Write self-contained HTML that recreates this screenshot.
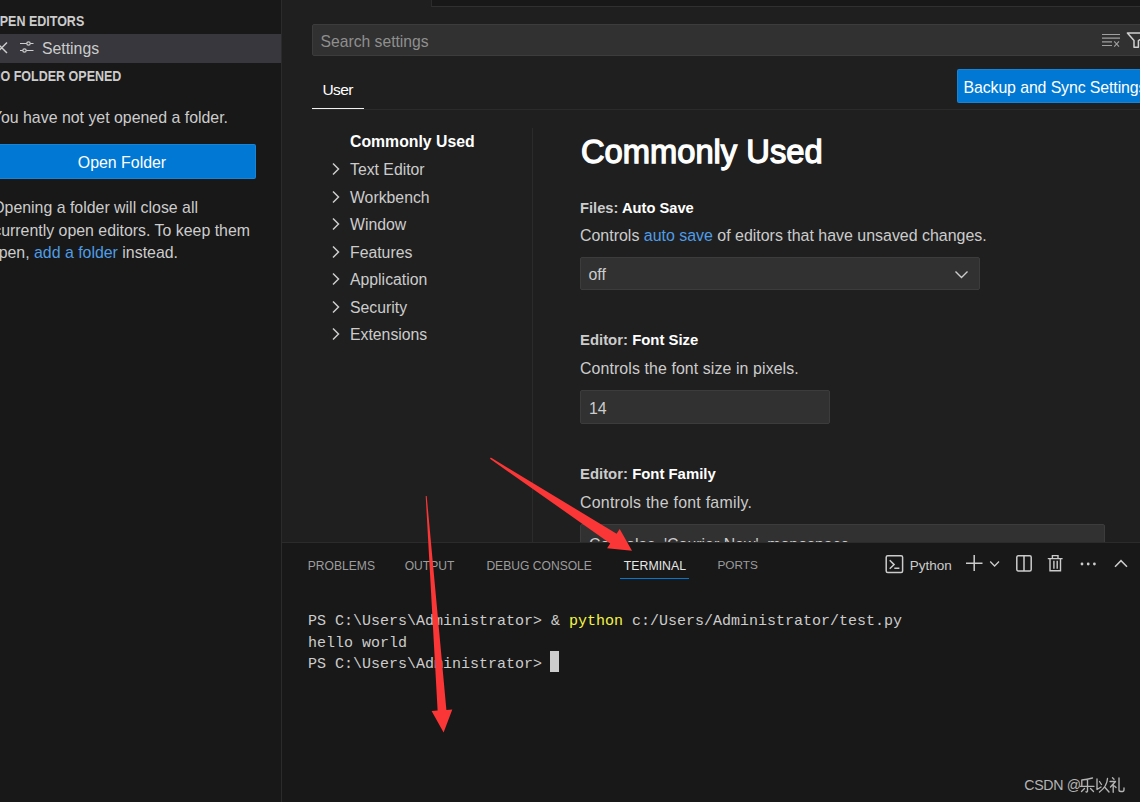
<!DOCTYPE html>
<html><head><meta charset="utf-8">
<style>
*{margin:0;padding:0;box-sizing:border-box}
html,body{width:1140px;height:802px;overflow:hidden;background:#1f1f1f;font-family:"Liberation Sans",sans-serif;color:#cccccc}
.a{position:absolute;white-space:pre}
.t{position:absolute;white-space:pre;line-height:1}
.mono{font-family:"Liberation Mono",monospace}
</style></head><body>
<!-- SIDEBAR -->
<div class="a" style="left:0;top:0;width:281px;height:802px;background:#181818"></div>
<div class="a" style="left:281px;top:0;width:1px;height:802px;background:#2b2b2b"></div>
<div class="t" style="left:-10px;top:15.5px;font-size:12.5px;font-weight:700;color:#cccccc;transform:scaleY(1.1);transform-origin:0 10.6px">OPEN EDITORS</div>
<div class="a" style="left:0;top:34px;width:281px;height:29px;background:#37373d"></div>
<svg class="a" style="left:0;top:40px" width="40" height="18" viewBox="0 0 40 18">
 <path d="M-3.5 2.5 L7 13 M7 2.5 L-3.5 13" stroke="#cccccc" stroke-width="1.5" fill="none"/>
 <path d="M20 3.5 H26.8 M30.2 3.5 H33.5 M20 10.5 H22.8 M26.2 10.5 H33.5" stroke="#cccccc" stroke-width="1.2" fill="none"/>
 <circle cx="28.5" cy="3.5" r="1.7" stroke="#cccccc" stroke-width="1.2" fill="none"/>
 <circle cx="24.5" cy="10.5" r="1.7" stroke="#cccccc" stroke-width="1.2" fill="none"/>
</svg>
<div class="t" style="left:42px;top:40.6px;font-size:15.8px;color:#cccccc">Settings</div>
<div class="t" style="left:-8.5px;top:71px;font-size:12.5px;font-weight:700;color:#cccccc;transform:scaleY(1.1);transform-origin:0 10.6px">NO FOLDER OPENED</div>
<div class="t" style="right:912px;top:110px;font-size:15.9px">You have not yet opened a folder.</div>
<div class="a" style="left:-14px;top:144px;width:270px;height:35px;background:#0078d4;border-radius:2px;border:1px solid rgba(255,255,255,0.09)"></div>
<div class="t" style="left:0;width:244px;text-align:center;top:154.8px;font-size:15.9px;color:#ffffff">Open Folder</div>
<div class="t" style="right:942px;top:199.5px;font-size:15.9px">Opening a folder will close all</div>
<div class="t" style="right:890px;top:222.9px;font-size:15.9px">currently open editors. To keep them</div>
<div class="t" style="right:962px;top:245px;font-size:15.9px">open, <span style="color:#4f9de6">add a folder</span> instead.</div>

<!-- EDITOR -->
<div class="a" style="left:431px;top:0;width:709px;height:7px;background:#181818;border-left:1px solid #2b2b2b;border-bottom:1.5px solid #303030"></div>
<div class="a" style="left:312px;top:24px;width:840px;height:32px;background:#313131;border:1px solid #3c3c3c;border-radius:2px"></div>
<div class="t" style="left:320.5px;top:33.8px;font-size:15.7px;color:#8f8f8f">Search settings</div>
<svg class="a" style="left:1100px;top:32px" width="40" height="18" viewBox="0 0 40 18">
 <path d="M2 2.5 H20 M2 6.1 H20 M2 9.8 H12 M2 13.5 H12" stroke="#a0a0a0" stroke-width="1.2" fill="none"/>
 <path d="M14.2 9.4 L19 14.6 M19 9.4 L14.2 14.6" stroke="#a0a0a0" stroke-width="1.1" fill="none"/>
 <path d="M27.4 1 H52 L38.4 8.6 V15.3 H34 V8.6 Z" stroke="#d0d0d0" stroke-width="1.5" fill="none" stroke-linejoin="round"/>
</svg>
<div class="t" style="left:322.5px;top:81.8px;font-size:15.5px;color:#ffffff;letter-spacing:-0.6px">User</div>
<div class="a" style="left:312px;top:109px;width:828px;height:1px;background:#2b2b2b"></div>
<div class="a" style="left:312px;top:107.8px;width:52px;height:1.7px;background:#f2f2f2"></div>
<div class="a" style="left:957px;top:69px;width:200px;height:34px;background:#0078d4;border-radius:2px;border:1px solid rgba(255,255,255,0.09)"></div>
<div class="t" style="left:963.5px;top:79.5px;font-size:15.9px;color:#ffffff;letter-spacing:-0.11px">Backup and Sync Settings</div>

<!-- TOC -->
<div class="t" style="left:350px;top:134.4px;font-size:15.8px;font-weight:700;color:#ffffff">Commonly Used</div>
<div class="t" style="left:350px;top:162.4px;font-size:15.8px;color:#cccccc">Text Editor</div>
<svg class="a" style="left:330px;top:162.3px" width="14" height="14" viewBox="0 0 14 14"><path d="M3 1.5 L8.5 7 L3 12.5" stroke="#cccccc" stroke-width="1.5" fill="none"/></svg>
<div class="t" style="left:350px;top:189.9px;font-size:15.8px;color:#cccccc">Workbench</div>
<svg class="a" style="left:330px;top:189.8px" width="14" height="14" viewBox="0 0 14 14"><path d="M3 1.5 L8.5 7 L3 12.5" stroke="#cccccc" stroke-width="1.5" fill="none"/></svg>
<div class="t" style="left:350px;top:217.4px;font-size:15.8px;color:#cccccc">Window</div>
<svg class="a" style="left:330px;top:217.3px" width="14" height="14" viewBox="0 0 14 14"><path d="M3 1.5 L8.5 7 L3 12.5" stroke="#cccccc" stroke-width="1.5" fill="none"/></svg>
<div class="t" style="left:350px;top:244.9px;font-size:15.8px;color:#cccccc">Features</div>
<svg class="a" style="left:330px;top:244.8px" width="14" height="14" viewBox="0 0 14 14"><path d="M3 1.5 L8.5 7 L3 12.5" stroke="#cccccc" stroke-width="1.5" fill="none"/></svg>
<div class="t" style="left:350px;top:272.4px;font-size:15.8px;color:#cccccc">Application</div>
<svg class="a" style="left:330px;top:272.3px" width="14" height="14" viewBox="0 0 14 14"><path d="M3 1.5 L8.5 7 L3 12.5" stroke="#cccccc" stroke-width="1.5" fill="none"/></svg>
<div class="t" style="left:350px;top:299.9px;font-size:15.8px;color:#cccccc">Security</div>
<svg class="a" style="left:330px;top:299.8px" width="14" height="14" viewBox="0 0 14 14"><path d="M3 1.5 L8.5 7 L3 12.5" stroke="#cccccc" stroke-width="1.5" fill="none"/></svg>
<div class="t" style="left:350px;top:327.4px;font-size:15.8px;color:#cccccc">Extensions</div>
<svg class="a" style="left:330px;top:327.3px" width="14" height="14" viewBox="0 0 14 14"><path d="M3 1.5 L8.5 7 L3 12.5" stroke="#cccccc" stroke-width="1.5" fill="none"/></svg>
<div class="a" style="left:532px;top:128px;width:1px;height:414px;background:#2b2b2b"></div>

<!-- CONTENT -->
<div class="t" style="left:581px;top:136px;font-size:32.7px;font-weight:400;color:#ffffff;-webkit-text-stroke:1.3px #ffffff">Commonly Used</div>
<div class="t" style="left:580px;top:201px;font-size:14.7px;font-weight:700;color:#cccccc">Files: <span style="color:#ffffff">Auto Save</span></div>
<div class="t" style="left:580px;top:227.5px;font-size:15.95px">Controls <span style="color:#4f9de6">auto save</span> of editors that have unsaved changes.</div>
<div class="a" style="left:580px;top:257px;width:400px;height:33px;background:#313131;border:1px solid #3c3c3c;border-radius:2px"></div>
<div class="t" style="left:588.5px;top:266.5px;font-size:15.9px">off</div>
<svg class="a" style="left:952px;top:267.5px" width="20" height="14" viewBox="0 0 20 14">
 <path d="M3.5 3.5 L9.5 9.5 L15.5 3.5" stroke="#cccccc" stroke-width="1.4" fill="none"/>
</svg>

<div class="t" style="left:580px;top:332.5px;font-size:14.9px;font-weight:700;color:#cccccc">Editor: <span style="color:#ffffff">Font Size</span></div>
<div class="t" style="left:580px;top:360.5px;font-size:15.9px;letter-spacing:0.1px">Controls the font size in pixels.</div>
<div class="a" style="left:580px;top:390px;width:250px;height:34px;background:#313131;border:1px solid #3c3c3c;border-radius:2px"></div>
<div class="t" style="left:589px;top:400.5px;font-size:15.9px">14</div>

<div class="t" style="left:580px;top:467px;font-size:14.9px;font-weight:700;color:#cccccc">Editor: <span style="color:#ffffff">Font Family</span></div>
<div class="t" style="left:580px;top:494.5px;font-size:15.9px;letter-spacing:0.26px">Controls the font family.</div>
<div class="a" style="left:580px;top:524px;width:525px;height:34px;background:#313131;border:1px solid #3c3c3c;border-radius:2px"></div>
<div class="t" style="left:589px;top:536.5px;font-size:15.9px">Consolas, 'Courier New', monospace</div>

<!-- PANEL -->
<div class="a" style="left:282px;top:542px;width:858px;height:260px;background:#181818;border-top:1px solid #2b2b2b"></div>

<div class="t" style="left:307.8px;top:559.7px;font-size:12.1px;color:#9d9d9d">PROBLEMS</div>
<div class="t" style="left:404.7px;top:559.7px;font-size:12.1px;color:#9d9d9d">OUTPUT</div>
<div class="t" style="left:486.4px;top:559.7px;font-size:12.1px;color:#9d9d9d">DEBUG CONSOLE</div>
<div class="t" style="left:623.8px;top:559.7px;font-size:12.3px;color:#e7e7e7">TERMINAL</div>
<div class="t" style="left:717.4px;top:559.7px;font-size:11.8px;color:#9d9d9d">PORTS</div>
<div class="a" style="left:620px;top:577.5px;width:69px;height:1.5px;background:#0078d4"></div>
<svg class="a" style="left:880px;top:550px" width="260" height="28" viewBox="0 0 260 28">
 <g stroke="#cccccc" stroke-width="1.5" fill="none">
 <rect x="6.2" y="5.8" width="16.4" height="16.6" rx="1.5"/>
 <path d="M9.7 10.3 L14.1 14.6 L9.7 18.8 M14.3 18.3 H19.4"/>
 <path d="M94.2 5 V21 M86 13.2 H102.5"/>
 <path d="M110.2 11.5 L114.6 16 L119 11.5" stroke-width="1.3"/>
 <rect x="136.8" y="5.7" width="14.4" height="15.3" rx="1.5"/>
 <path d="M144 5.7 V21"/>
 <path d="M167.8 8.6 H182.6 M172.4 8.6 V5.6 H178 V8.6 M170 8.6 V20.8 H180.5 V8.6 M173.9 10.8 V18.8 M177.2 10.8 V18.8" stroke-width="1.4"/>
 <path d="M235 16.7 L241 10.6 L247 16.7"/>
 </g>
 <circle cx="202" cy="14" r="1.4" fill="#cccccc"/><circle cx="208.2" cy="14" r="1.4" fill="#cccccc"/><circle cx="214.4" cy="14" r="1.4" fill="#cccccc"/>
</svg>
<div class="t" style="left:909.8px;top:558.5px;font-size:13.5px;color:#cccccc">Python</div>
<div class="t mono" style="left:307.9px;top:613.5px;font-size:15px;color:#cccccc">PS C:\Users\Administrator&gt; &amp; <span style="color:#f5f543">python</span> c:/Users/Administrator/test.py</div>
<div class="t mono" style="left:307.9px;top:635.6px;font-size:15px;color:#cccccc">hello world</div>
<div class="t mono" style="left:307.9px;top:657.3px;font-size:15px;color:#cccccc">PS C:\Users\Administrator&gt; </div>
<div class="a" style="left:549.5px;top:651px;width:9.5px;height:21px;background:#cccccc"></div>
<div class="t" style="left:1024.3px;top:777.8px;font-size:14.2px;color:#b4b4b4;letter-spacing:-0.35px">CSDN @</div>
<svg class="a" style="left:1079px;top:777px" width="48" height="17" viewBox="0 0 48 17">
<g stroke="#b4b4b4" stroke-width="1.35" fill="none" stroke-linecap="round" stroke-linejoin="round">
<path d="M13.5 1 Q8 2.3 2.8 3 V9.3 M1.2 9.3 H15 M8.5 3.2 V14.3 Q8.5 15.3 7 14.8 M5.5 11.5 L2.5 14.5 M11.5 11.5 L14.5 14.5"/>
<path d="M18 2 V12.5 L22 10 M20.5 4.5 L22.5 7.5 M28.5 1.5 Q28 9.5 20.5 15 M26 10.5 L30 15"/>
<path d="M33.5 0.8 L35 2.3 M31 4.5 H36.5 L31.5 10 M34.2 7.5 V15.3 M35.5 9 L37 10.5 M40 1 V13 Q40 14.5 42 14.5 H43.5 Q45 14.5 45 12.5 V11"/>
</g></svg>

<!-- ARROWS -->
<svg class="a" style="left:0;top:0" width="1140" height="802" viewBox="0 0 1140 802"><polygon fill="#fa3636" points="490.0,458.8 610.2,543.4 607.1,548.2 632.0,550.7 619.7,528.9 616.6,533.7 490.8,457.6"/><polygon fill="#fa3636" points="425.7,496.0 437.6,710.6 431.6,711.0 443.6,732.4 452.3,709.5 446.4,709.9 426.7,496.0"/></svg>
</body></html>
